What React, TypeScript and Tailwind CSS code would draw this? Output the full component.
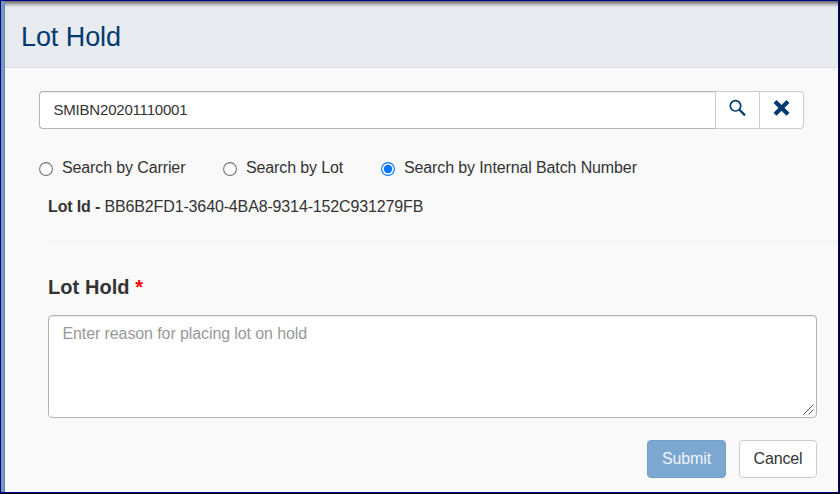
const radios = [
  { label: 'Search by Carrier', width: 'w-[184px]', checked: false },
  { label: 'Search by Lot', width: 'w-[158px]', checked: false },
  { label: 'Search by Internal Batch Number', width: 'w-[270px]', checked: true },
];

function Radio({ checked }: { checked: boolean }) {
  return (
    <svg className="mt-[5px] h-[14px] w-[14px] shrink-0" viewBox="0 0 14 14">
      <circle cx="7" cy="7" r="6.4" fill="#fff" stroke={checked ? '#0075ff' : '#767676'} strokeWidth="1.1" />
      {checked && <circle cx="7" cy="7" r="4.2" fill="#0075ff" />}
    </svg>
  );
}

export default function App() {
  return (
    <div className="h-[494px] w-[840px] border-r border-b border-black bg-black font-['Liberation_Sans',Arial,sans-serif] text-[16px] leading-[22px] text-[#333]">
      <div className="flex h-[493px] w-[839px] border border-[#00008b] bg-[#f9f9f9]">
        <div className="w-1 shrink-0 border-r border-[#6289b2] bg-[#7799bb]" />
        <div className="flex min-w-0 flex-1 flex-col">
          <header className="flex h-[67px] shrink-0 items-center border-b border-[#dcdfe7] bg-[#e8ebf0] bg-[linear-gradient(to_bottom,#6c6c70_0px,#929397_2px,#c5c7cb_4px,#e1e4e9_6px,#e8ebf0_8px)] pt-[6px] pl-4">
            <h1 className="text-[27px] leading-8 tracking-[-0.08px] text-[#003a70]">Lot Hold</h1>
          </header>
          <div className="mt-[23px] ml-[34px] flex h-[38px] w-[765px] shrink-0">
            <div className="flex w-[676px] items-center rounded-l border border-r-0 border-[#b3b5b9] bg-white pl-[13.5px] text-[15px] tracking-[-0.2px] shadow-[inset_0_1px_1px_rgba(0,0,0,0.075)]">
              SMIBN20201110001
            </div>
            <button className="flex w-[45px] items-start border border-[#ccc] bg-white pt-[7px] pl-[13px]">
              <svg className="h-[18px] w-[18px]" viewBox="0 0 18 18" fill="none" stroke="#003a70" strokeWidth="1.7">
                <circle cx="6.5" cy="6.8" r="5.2" />
                <path d="M10.4 10.8l5.6 5.6" strokeWidth="2.2" />
              </svg>
            </button>
            <button className="flex w-[44px] items-start rounded-r border border-l-0 border-[#ccc] bg-white pt-[7px] pl-[13px]">
              <svg className="h-[18px] w-[18px]" viewBox="0 0 18 18" fill="none" stroke="#003a70" strokeWidth="4.2">
                <path d="M2 2.4L15 15.2M15 2.4L2 15.2" />
              </svg>
            </button>
          </div>
          <div className="mt-[28px] ml-[34px] flex h-[22px] shrink-0">
            {radios.map((r) => (
              <label key={r.label} className={'flex shrink-0 items-start gap-[9px] ' + r.width}>
                <Radio checked={r.checked} />
                <span className="whitespace-nowrap tracking-[-0.12px]">{r.label}</span>
              </label>
            ))}
          </div>
          <div className="mt-[17px] ml-[43px] shrink-0 tracking-[-0.14px]">
            <b>Lot Id -</b> BB6B2FD1-3640-4BA8-9314-152C931279FB
          </div>
          <div className="mt-[23px] ml-[43px] h-px shrink-0 bg-[#eee]" />
          <h2 className="mt-[33px] ml-[43px] shrink-0 text-[20px] leading-6 font-bold tracking-[0.06px]">
            Lot Hold <span className="text-[#f00]">*</span>
          </h2>
          <div className="mt-[16px] ml-[43px] flex h-[103px] w-[769px] shrink-0 items-start justify-between rounded border border-[#b3b3b3] bg-white pl-[13.5px] text-[#999] shadow-[inset_0_1px_1px_rgba(0,0,0,0.075)]">
            <span className="pt-[7px] tracking-[-0.1px]">Enter reason for placing lot on hold</span>
            <svg className="mr-[2px] mb-[2px] h-[11px] w-[11px] self-end" viewBox="0 0 11 11" stroke="#555" strokeWidth="1">
              <path d="M0.5 10.5l10-10M5.5 10.5l5-5" />
            </svg>
          </div>
          <div className="mt-[22px] mr-[21px] flex h-[38px] shrink-0 justify-end gap-[13px]">
            <button className="w-[79px] rounded border border-[#709fcb] bg-[#7ba7d0] tracking-[-0.1px] text-[#eef4fa]">Submit</button>
            <button className="w-[78px] rounded border border-[#ccc] bg-white tracking-[-0.15px]">Cancel</button>
          </div>
        </div>
      </div>
    </div>
  );
}
